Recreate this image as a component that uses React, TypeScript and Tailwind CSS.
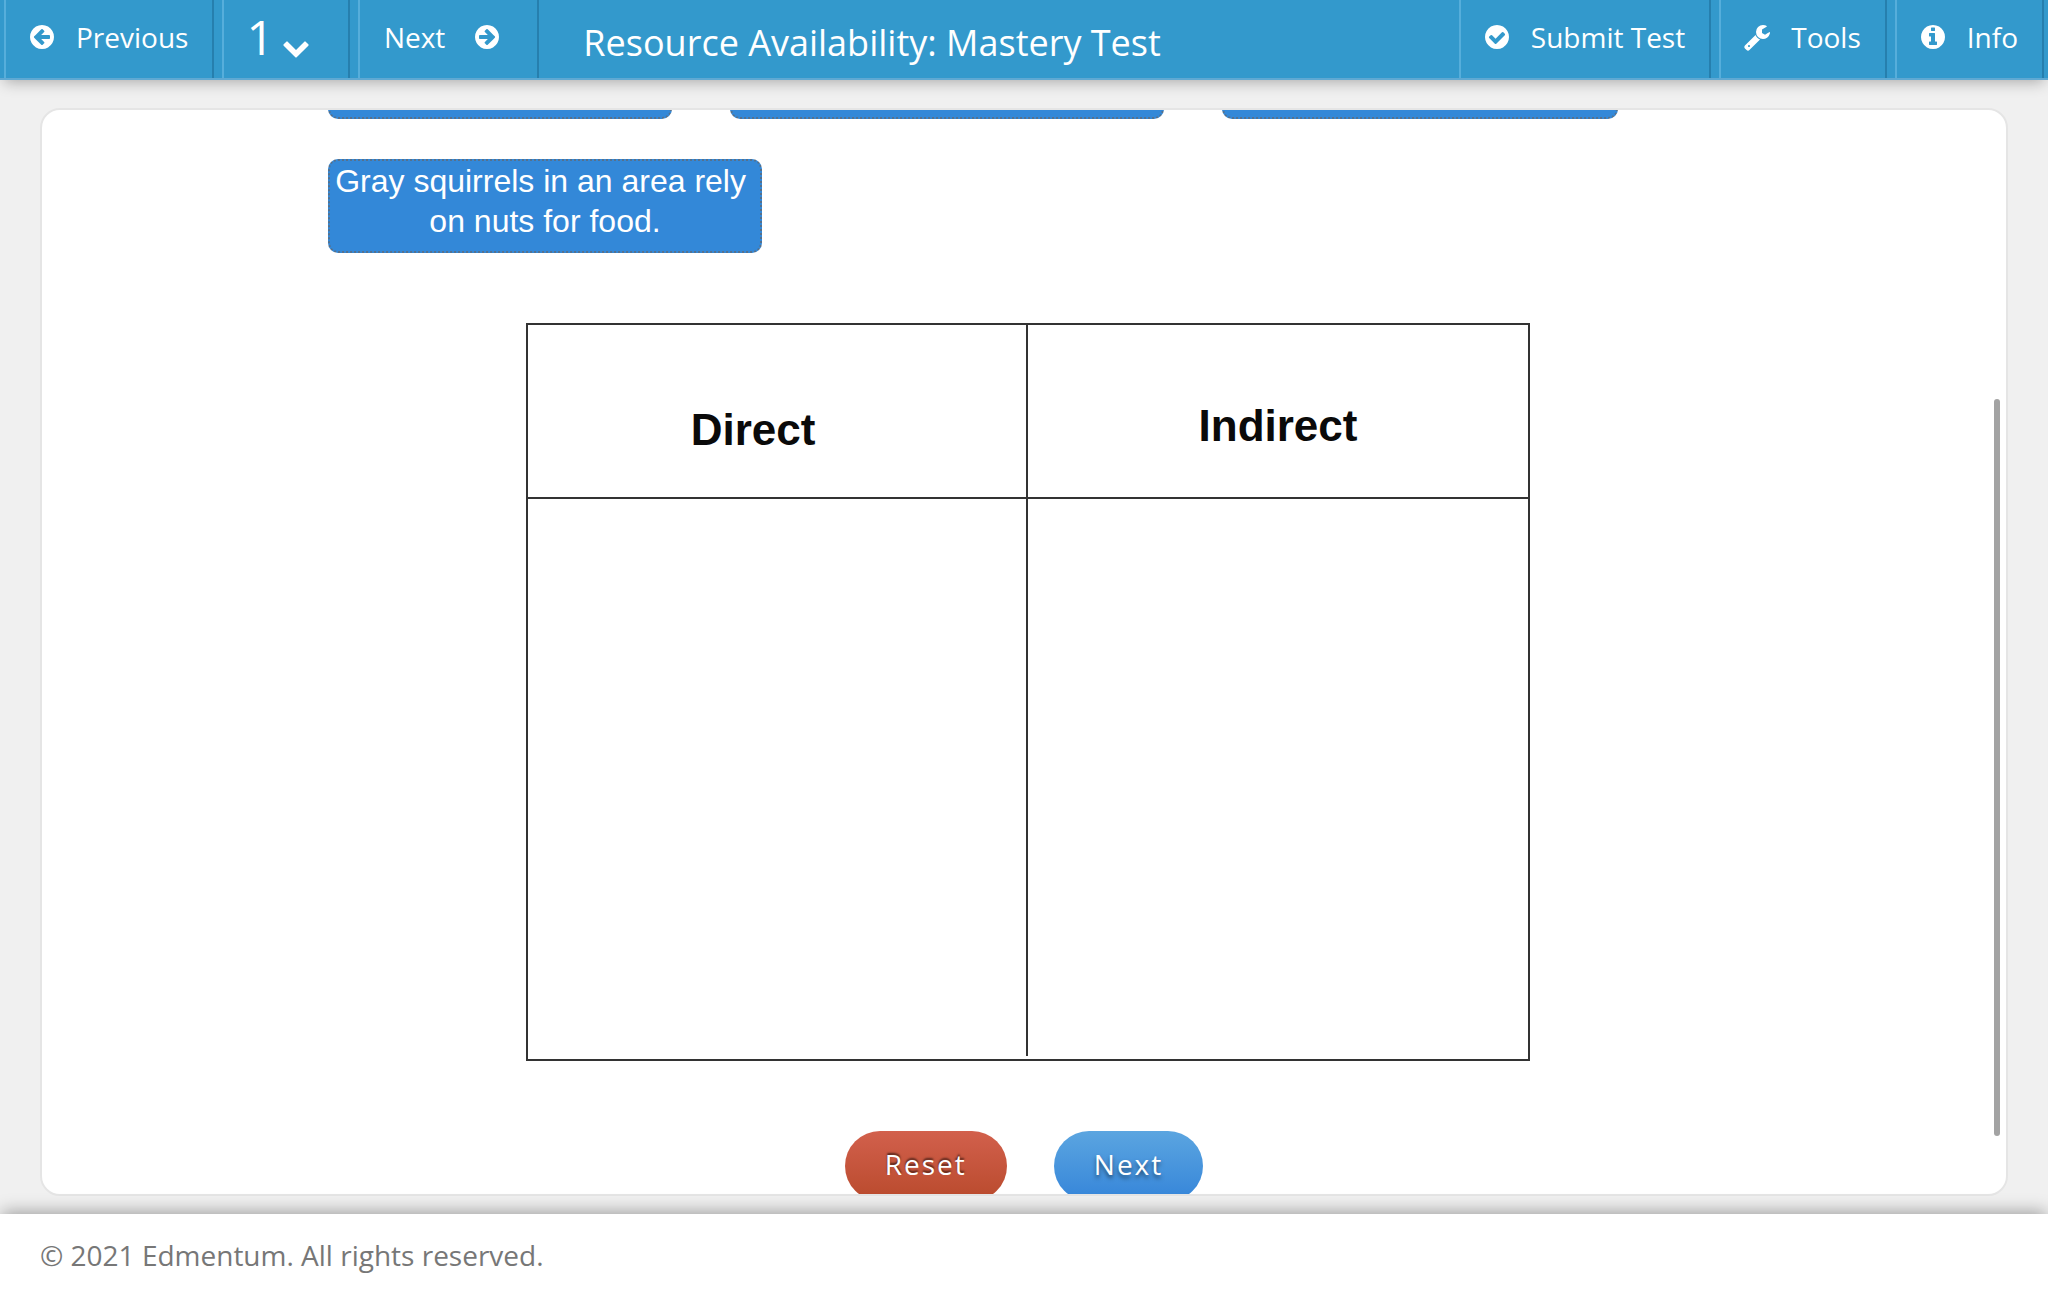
const RING =
  'q0 209-103 385.5t-279.5 279.5-385.5 103-385.5-103-279.5-279.5-103-385.5 103-385.5 279.5-279.5 385.5-103 385.5 103 279.5 279.5 103 385.5z';

const ICONS = {
  arrow:
    'M1408 960v-128q0-26-19-45t-45-19h-502l189-189q19-19 19-45t-19-45l-91-91q-18-18-45-18t-45 18l-362 362-91 91q-18 18-18 45t18 45l91 91 362 362q18 18 45 18t45-18l91-91q18-18 18-45t-18-45l-189-189h502q26 0 45-19t19-45zm256-64' +
    RING,
  check:
    'M1412 734q0-28-18-46l-91-90q-19-19-45-19t-45 19l-408 407-226-226q-19-19-45-19t-45 19l-91 90q-18 18-18 46 0 27 18 45l362 362q19 19 45 19 27 0 46-19l543-543q18-18 18-45zm252 162' +
    RING,
  info:
    'M1152 1376v-160q0-14-9-23t-23-9h-96v-512q0-14-9-23t-23-9h-320q-14 0-23 9t-9 23v160q0 14 9 23t23 9h96v320h-96q-14 0-23 9t-9 23v160q0 14 9 23t23 9h448q14 0 23-9t9-23zm-128-896v-160q0-14-9-23t-23-9h-192q-14 0-23 9t-9 23v160q0 14 9 23t23 9h192q14 0 23-9t9-23zm640 416' +
    RING,
  wrench:
    'M448 1472q0-26-19-45t-45-19-45 19-19 45 19 45 45 19 45-19 19-45zm644-420l-682 682q-37 37-90 37-52 0-91-37l-106-108q-38-36-38-90 0-53 38-91l681-681q39 98 114.5 173.5t173.5 114.5zm634-435q0 39-23 106-47 134-164.5 217.5t-258.5 83.5q-185 0-316.5-131.5t-131.5-316.5 131.5-316.5 316.5-131.5q58 0 121.5 16.5t107.5 46.5q16 11 16 28t-16 28l-293 169v224l193 107q5-3 79-48.5t135.5-81 70.5-35.5q15 0 23.5 10t8.5 25z',
  chevron:
    'M1683 808l-742 741q-19 19-45 19t-45-19l-742-741q-19-19-19-45.5t19-45.5l166-165q19-19 45-19t45 19l531 531 531-531q19-19 45-19t45 19l166 165q19 19 19 45.5t-19 45.5z',
};

function Icon({ name, className = '' }: { name: keyof typeof ICONS; className?: string }) {
  return (
    <svg viewBox="0 0 1792 1792" aria-hidden="true" className={`size-7 shrink-0 fill-current ${className}`}>
      <path d={ICONS[name]} />
    </svg>
  );
}

const NAV_BUTTON =
  'flex h-[78px] items-center border-l-2 border-r-2 border-l-[#56aedb] border-r-[#267fae] pb-1 text-[28px] leading-10';

function TopBar() {
  return (
    <header className="relative z-10 flex h-20 shrink-0 items-start border-b-2 border-[#5fa9d3] bg-[#3399cc] px-1 text-white shadow-[0_6px_14px_-4px_rgba(0,0,0,0.3)]">
      <nav aria-label="Questions" className="flex gap-2">
        <button type="button" className={`${NAV_BUTTON} gap-5 pl-[22px] pr-6`}>
          <Icon name="arrow" />
          Previous
        </button>
        <button type="button" aria-label="Question 1" className={`${NAV_BUTTON} gap-2 pl-[22px] pr-[38px]`}>
          <span className="text-[48px]">1</span>
          <Icon name="chevron" className="mt-5" />
        </button>
        <button type="button" className={`${NAV_BUTTON} gap-7 pl-6 pr-9`}>
          Next
          <Icon name="arrow" className="-scale-x-100" />
        </button>
      </nav>
      <h1 className="grow self-center pl-11 pt-2 text-[36px] leading-[48px]">
        Resource Availability: Mastery Test
      </h1>
      <div className="flex gap-2">
        <button type="button" className={`${NAV_BUTTON} gap-5 pl-[22px] pr-6`}>
          <Icon name="check" />
          Submit Test
        </button>
        <button type="button" className={`${NAV_BUTTON} gap-5 pl-[22px] pr-6`}>
          <Icon name="wrench" />
          Tools
        </button>
        <button type="button" className={`${NAV_BUTTON} gap-5 pl-[22px] pr-6`}>
          <Icon name="info" />
          Info
        </button>
      </div>
    </header>
  );
}

const TILE =
  'h-[94px] shrink-0 rounded-[10px] border-2 border-dotted border-[#56718c] bg-[#3388d8] text-center text-[32px] leading-10 text-white';

function Tiles() {
  return (
    <div className="flex flex-col gap-10 font-['Liberation_Sans',Arial,sans-serif]">
      {/* scrolled almost out of view */}
      <div className="flex h-[9px] items-end gap-[58px]">
        <button type="button" aria-label="Tile 1" className={`${TILE} w-[344px]`} />
        <button type="button" aria-label="Tile 2" className={`${TILE} w-[434px]`} />
        <button type="button" aria-label="Tile 3" className={`${TILE} w-[396px]`} />
      </div>
      <div className="flex">
        <button type="button" className={`${TILE} w-[434px] pb-[14px]`}>
          Gray squirrels in an area rely&nbsp;
          <br />
          on nuts for food.
        </button>
      </div>
    </div>
  );
}

function DropTable() {
  return (
    <table className="w-[1004px] table-fixed border-separate border-spacing-0 border-2 border-[#333] font-['Liberation_Sans',Arial,sans-serif] text-[44px] leading-[48px] text-[#0a0a0a]">
      <thead>
        <tr className="h-[174px]">
          <th scope="col" className="border-b-2 border-r-2 border-[#333] pr-12 pt-[38px]">
            Direct
          </th>
          <th scope="col" className="border-b-2 border-[#333] pt-[30px]">
            Indirect
          </th>
        </tr>
      </thead>
      <tbody>
        <tr>
          <td className="p-0 pb-[3px]">
            <div className="h-[557px] border-r-2 border-[#333]" />
          </td>
          <td className="p-0" />
        </tr>
      </tbody>
    </table>
  );
}

const PILL = 'h-[70px] rounded-full px-10 pb-1 text-[28px] font-medium leading-10 tracking-[2px] text-white';

export default function App() {
  return (
    <div className="flex h-screen flex-col bg-[#f0f0f0] font-['Open_Sans',sans-serif]">
      <TopBar />
      <main className="mx-10 mb-[18px] mt-7 flex min-h-0 grow justify-end overflow-hidden rounded-[20px] border-2 border-[#e5e5e5] bg-white">
        <div className="flex grow justify-center pl-3">
          <div className="flex w-[1392px] flex-col">
            <Tiles />
            <div className="mt-[70px] flex justify-center pl-2">
              <DropTable />
            </div>
            <div className="mt-[70px] flex justify-center gap-[47px]">
              <button
                type="button"
                className={`${PILL} bg-linear-to-b from-[#d2604c] to-[#b94a2c] [text-shadow:0_-2px_2px_rgba(0,0,0,0.6)]`}
              >
                Reset
              </button>
              <button
                type="button"
                className={`${PILL} bg-linear-to-b from-[#5ba5e0] to-[#3585d9] [text-shadow:0_3px_4px_rgba(0,0,0,0.5)]`}
              >
                Next
              </button>
            </div>
          </div>
        </div>
        <div aria-hidden="true" className="mr-[6px] mt-[289px] h-[737px] w-[6px] shrink-0 rounded-full bg-[#a3a3a3]" />
      </main>
      <footer className="relative z-10 h-[82px] shrink-0 bg-white px-10 pt-[21px] text-[28px] leading-10 text-[#777] shadow-[0_-4px_16px_-2px_rgba(0,0,0,0.35)]">
        © 2021 Edmentum. All rights reserved.
      </footer>
    </div>
  );
}
